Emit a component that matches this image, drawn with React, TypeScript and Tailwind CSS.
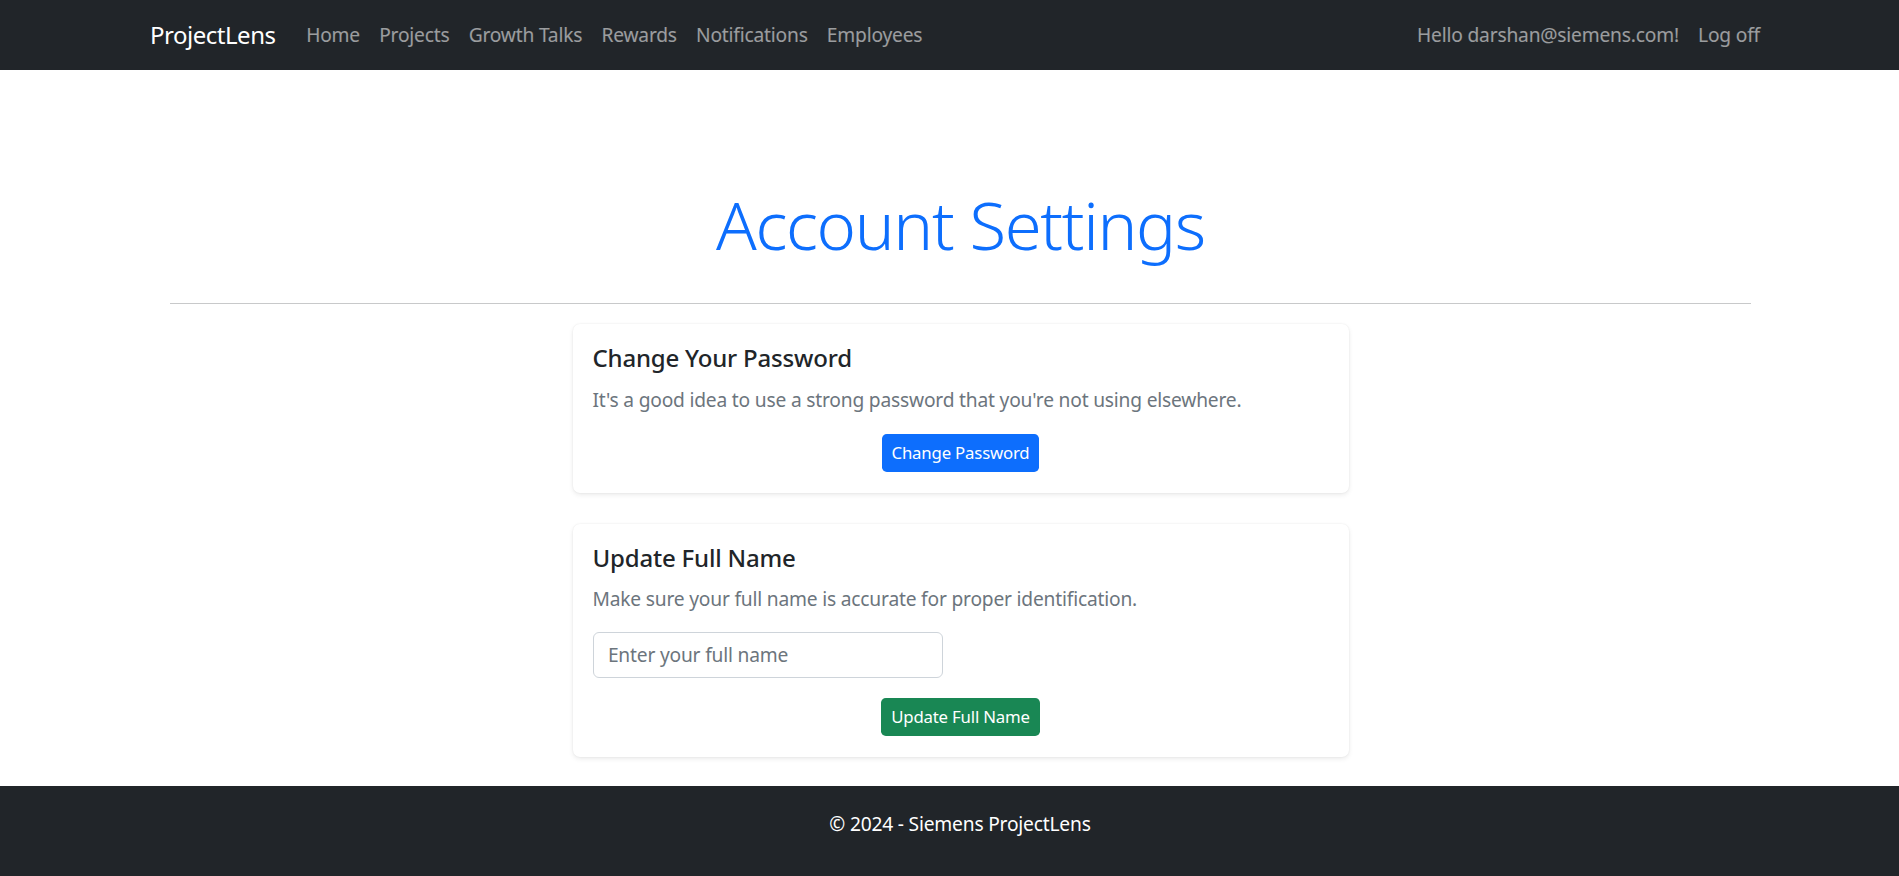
export default function App() {
  const links = ['Home', 'Projects', 'Growth Talks', 'Rewards', 'Notifications', 'Employees'];

  return (
    <div className="min-h-screen bg-white font-['Noto_Sans','Open_Sans',sans-serif] tracking-[-0.012em]">
      {/* Navbar */}
      <nav className="flex h-[70px] items-center bg-[#212529] pl-[150px] pr-[139px]">
        <a href="#" className="mr-[21px] text-[24px] leading-[30px] tracking-[-0.02em] text-white">
          ProjectLens
        </a>
        <ul className="flex">
          {links.map((l) => (
            <li key={l}>
              <a href="#" className="block px-[9.6px] text-[19.2px] leading-[28.8px] text-white/55">
                {l}
              </a>
            </li>
          ))}
        </ul>
        <ul className="ml-auto flex items-center gap-[19.2px]">
          <li className="text-[19.2px] leading-[28.8px] text-white/55">Hello darshan@siemens.com!</li>
          <li>
            <a href="#" className="block text-[19.2px] leading-[28.8px] text-white/55">
              Log off
            </a>
          </li>
        </ul>
      </nav>

      {/* Main */}
      <main className="ml-[170px] w-[1581px]">
        <h1 className="mt-[114px] text-center text-[67px] font-light leading-[80px] tracking-[-0.02em] text-[#0d6efd]">
          Account Settings
        </h1>
        <hr className="mt-[39px] border-t border-[#c8c9ca]" />

        <div className="mx-auto mt-[20px] w-[776px]">
          {/* Change password */}
          <section className="mb-[31px] rounded-[7px] bg-white px-[20px] pb-[21px] pt-[20px] shadow-[0_0_2px_rgba(0,0,0,0.08),0_2px_5px_rgba(0,0,0,0.08)]">
            <h5 className="mb-[13px] text-[24px] font-medium leading-[28.8px] text-[#212529]">
              Change Your Password
            </h5>
            <p className="mb-[19px] text-[19.2px] leading-[28.8px] text-[#6c757d]">
              It's a good idea to use a strong password that you're not using elsewhere.
            </p>
            <div className="text-center">
              <button className="inline-flex h-[38px] items-center rounded-[4.8px] bg-[#0d6efd] px-[10px] text-[16.8px] text-white">
                Change Password
              </button>
            </div>
          </section>

          {/* Update name */}
          <section className="rounded-[7px] bg-white px-[20px] pb-[21px] pt-[20px] shadow-[0_0_2px_rgba(0,0,0,0.08),0_2px_5px_rgba(0,0,0,0.08)]">
            <h5 className="mb-[13px] text-[24px] font-medium leading-[28.8px] text-[#212529]">
              Update Full Name
            </h5>
            <p className="mb-[17.5px] text-[19.2px] leading-[28.8px] text-[#6c757d]">
              Make sure your full name is accurate for proper identification.
            </p>
            <input
              type="text"
              placeholder="Enter your full name"
              className="block h-[46px] w-[350px] rounded-[6px] border border-[#ced4da] px-[14.4px] text-[19.2px] text-[#212529] placeholder-[#6c757d] outline-none"
            />
            <div className="mt-[20px] text-center">
              <button className="inline-flex h-[38px] items-center rounded-[4.8px] bg-[#198754] px-[10px] text-[16.8px] text-white">
                Update Full Name
              </button>
            </div>
          </section>
        </div>
      </main>

      {/* Footer */}
      <footer className="mt-[29px] bg-[#212529] pb-[40px] pl-[21px] pt-[24px] text-center text-[19.2px] leading-[28.8px] text-white">
        © 2024 - Siemens ProjectLens
      </footer>
    </div>
  );
}
